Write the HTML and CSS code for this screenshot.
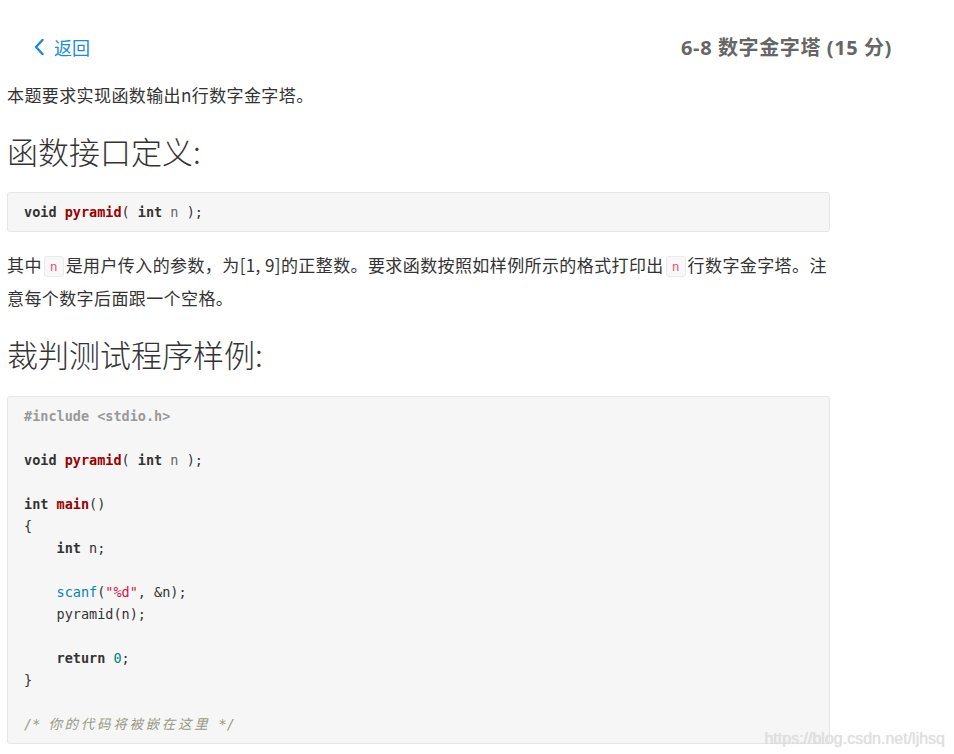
FILE: index.html
```html
<!DOCTYPE html>
<html lang="zh-CN">
<head>
<meta charset="utf-8">
<title>6-8 数字金字塔</title>
<link rel="stylesheet" href="styles.css">
</head>
<body>
<header class="topbar">
  <a class="back" href="#">
    <svg class="chev" width="12" height="18" viewBox="0 0 12 18"><path d="M9.5 2 L3 9 L9.5 16" fill="none" stroke="currentColor" stroke-width="2.4" stroke-linecap="round" stroke-linejoin="round"/></svg>
    <span>返回</span>
  </a>
  <div class="title">6-8 数字金字塔 (15 分)</div>
</header>
<main class="content">
  <p class="p1">本题要求实现函数输出n行数字金字塔。</p>
  <h2 class="h">函数接口定义:</h2>
  <pre class="code c1"><span class="kw">void</span> <span class="fn">pyramid</span>( <span class="kw">int</span> <span class="var">n</span> );</pre>
  <p class="p2">其中<code class="ic">n</code>是用户传入的参数，为[1, 9]的正整数。要求函数按照如样例所示的格式打印出<code class="ic">n</code>行数字金字塔。注意每个数字后面跟一个空格。</p>
  <h2 class="h h2">裁判测试程序样例:</h2>
  <pre class="code c2"><span class="meta">#include &lt;stdio.h&gt;</span>

<span class="kw">void</span> <span class="fn">pyramid</span>( <span class="kw">int</span> <span class="var">n</span> );

<span class="kw">int</span> <span class="fn">main</span>()
{
    <span class="kw">int</span> n;

    <span class="bi">scanf</span>(<span class="str">"%d"</span>, &amp;n);
    pyramid(n);

    <span class="kw">return</span> <span class="num">0</span>;
}

<span class="cm">/* <span class="cjk">你的代码将被嵌在这里</span> */</span></pre>
</main>
<div class="watermark">https://blog.csdn.net/ljhsq</div>
</body>
</html>
```
FILE: styles.css
```css
html, body {
  margin: 0;
  padding: 0;
  background: #fff;
}
body {
  font-family: "Noto Sans", "Noto Sans CJK SC", sans-serif;
  color: #333;
  width: 954px;
  height: 754px;
  overflow: hidden;
  position: relative;
}
.topbar {
  display: flex;
  justify-content: space-between;
  align-items: center;
  height: 33px;
  padding: 30px 62px 0 33px;
}
.back {
  display: flex;
  align-items: center;
  gap: 9px;
  color: #1e88e5;
  text-decoration: none;
  font-family: "Noto Sans CJK SC", sans-serif;
  font-size: 18px;
}
.chev {
  display: block;
}
.title {
  font-family: "Open Sans", "Noto Sans CJK SC", sans-serif;
  font-weight: 700;
  font-size: 20px;
  letter-spacing: 0.6px;
  color: #666;
}
.content {
  width: 823px;
  padding-left: 7px;
}
.p1, .p2 {
  margin: 0;
  font-family: "Noto Sans CJK SC", sans-serif;
  font-size: 17px;
  letter-spacing: 0.4px;
  line-height: 33px;
}
.p1 {
  margin-top: 15px;
}
.h {
  margin: 20px 0 0;
  font-family: "Noto Sans CJK SC", sans-serif;
  font-weight: 300;
  font-size: 31px;
  line-height: 40px;
  color: #333;
}
.h2 {
  margin-top: 20px;
}
.code {
  margin: 21px 0 0;
  padding: 8px 16px;
  background: #f6f6f6;
  border: 1px solid #e6e6e6;
  border-radius: 3px;
  font-family: "DejaVu Sans Mono", "Liberation Mono", "Noto Sans CJK SC", monospace;
  font-size: 13.5px;
  line-height: 22px;
  color: #333;
  white-space: pre;
}
.c2 {
  margin-top: 22px;
}
.p2 {
  margin-top: 16px;
}
.kw { font-weight: 700; color: #333; }
.fn { font-weight: 700; color: #990000; }
.var { color: #666; }
.meta { font-weight: 700; color: #999; }
.bi { color: #0086b3; }
.str { color: #dd1144; }
.num { color: #008080; }
.cm { color: #999988; font-style: italic; }
.cjk {
  letter-spacing: 2.7px;
}
.ic {
  display: inline-block;
  font-family: "DejaVu Sans Mono", monospace;
  font-size: 13px;
  line-height: 19px;
  letter-spacing: 0;
  padding: 0 5px;
  margin: 0 2px;
  color: #e8577a;
  background: #f8f8f8;
  border: 1px solid #eaeaea;
  border-radius: 3px;
  vertical-align: 1px;
}
.watermark {
  position: absolute;
  right: 9px;
  bottom: 6px;
  font-family: "Liberation Sans", Arial, sans-serif;
  font-size: 16px;
  color: #e0e0e0;
  text-shadow: 0 0 1px rgba(0,0,0,0.15);
}
```
